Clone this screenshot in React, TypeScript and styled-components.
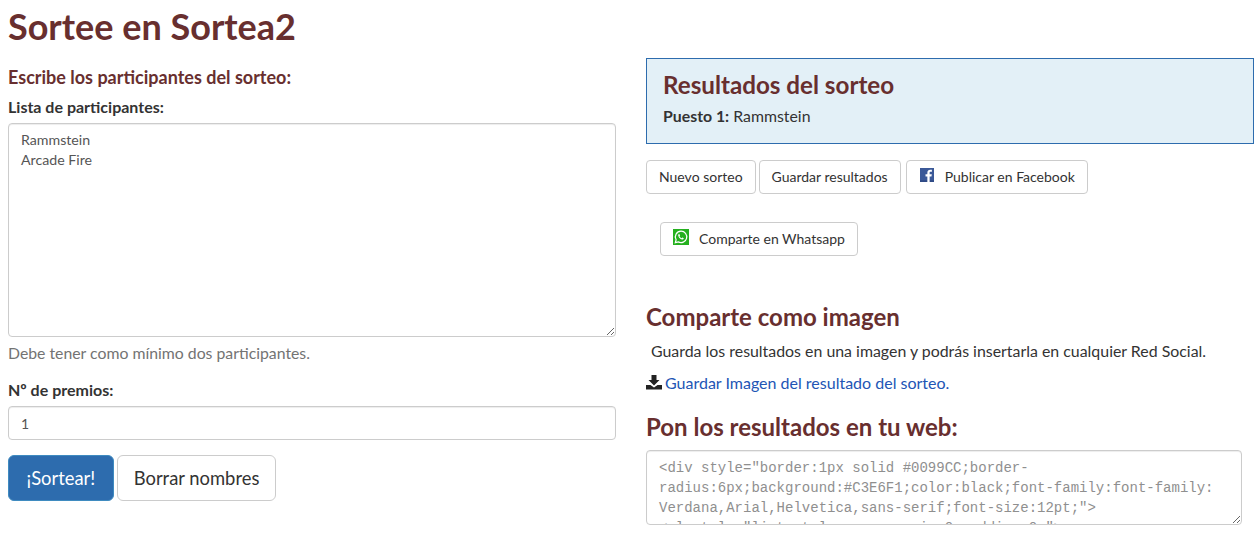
import React from "react";
import styled, { createGlobalStyle } from "styled-components";

const Global = createGlobalStyle`
  html, body { margin: 0; padding: 0; background: #fff; height: 535px; overflow: hidden; }
  body { font-family: Lato, "Liberation Sans", sans-serif; font-size: 14px; line-height: 20px; color: #333; }
  * { box-sizing: border-box; }
`;

const Page = styled.div`
  display: grid;
  grid-template-columns: 608px 608px;
  column-gap: 30px;
  padding: 0 0 0 8px;
  width: 1259px;
  height: 535px;
  overflow: hidden;
`;

const Column = styled.div`
  display: flex;
  flex-direction: column;
  min-width: 0;
`;

const Title = styled.h1`
  margin: 6px 0 0;
  font-size: 36px;
  line-height: 40px;
  font-weight: 700;
  color: #682f2f;
`;

const Subtitle = styled.h4`
  margin: 21px 0 0;
  font-size: 18px;
  line-height: 20px;
  font-weight: 700;
  color: #682f2f;
`;

const Label = styled.label<{ $top: number }>`
  display: block;
  margin: ${(p) => p.$top}px 0 6px;
  font-size: 16px;
  line-height: 20px;
  font-weight: 700;
  color: #333;
`;

const TextBox = styled.textarea<{ $h: number; $mono?: boolean; $w?: number }>`
  display: block;
  width: ${(p) => (p.$w ? `${p.$w}px` : "100%")};
  height: ${(p) => p.$h}px;
  padding: ${(p) => (p.$mono ? 7 : 6)}px 12px 6px;
  border: 1px solid #ccc;
  border-radius: 4px;
  box-shadow: inset 0 1px 1px rgba(0, 0, 0, 0.075);
  background: #fff;
  color: ${(p) => (p.$mono ? "#8f8f8f" : "#555")};
  font-family: ${(p) => (p.$mono ? '"Liberation Mono", monospace' : "Lato, sans-serif")};
  font-size: ${(p) => (p.$mono ? "14px" : "14.2px")};
  line-height: 20px;
  outline: none;
  overflow: hidden;
`;

const NumberBox = styled.input`
  display: block;
  width: 100%;
  height: 34px;
  padding: 6px 12px;
  border: 1px solid #ccc;
  border-radius: 4px;
  box-shadow: inset 0 1px 1px rgba(0, 0, 0, 0.075);
  color: #555;
  font-family: Lato, sans-serif;
  font-size: 14px;
  outline: none;
`;

const Help = styled.p`
  margin: 6px 0 0;
  font-size: 15.8px;
  line-height: 20px;
  color: #737373;
`;

const ActionRow = styled.div`
  display: flex;
  gap: 3px;
  margin-top: 15px;
`;

const BigButton = styled.button<{ $primary?: boolean }>`
  height: 46px;
  padding: 0 ${(p) => (p.$primary ? 17.5 : 16)}px;
  border: 1px solid ${(p) => (p.$primary ? "#3f8bc0" : "#ccc")};
  border-radius: 6px;
  background: ${(p) => (p.$primary ? "#2d6cae" : "#fff")};
  color: ${(p) => (p.$primary ? "#fff" : "#333")};
  font-family: Lato, sans-serif;
  font-size: 18.4px;
`;

const ResultPanel = styled.section`
  margin-top: 58px;
  height: 86px;
  padding: 10px 16px;
  border: 1px solid #2d6cae;
  background: #e3f0f7;
`;

const PanelTitle = styled.h3`
  margin: 3px 0 0;
  font-size: 24.2px;
  line-height: 26px;
  font-weight: 700;
  color: #682f2f;
`;

const PanelLine = styled.p`
  margin: 8px 0 0;
  font-size: 15.85px;
  line-height: 20px;
  color: #333;
  strong { font-weight: 700; }
`;

const ButtonRow = styled.div<{ $indent?: number; $top: number }>`
  display: flex;
  gap: 3px;
  margin: ${(p) => p.$top}px 0 0 ${(p) => p.$indent ?? 0}px;
`;

const SmallButton = styled.button<{ $shift?: number }>`
  display: inline-flex;
  align-items: center;
  height: 34px;
  padding: 0 12px 2px;
  margin-left: ${(p) => p.$shift ?? 0}px;
  border: 1px solid #ccc;
  border-radius: 4px;
  background: #fff;
  color: #333;
  font-family: Lato, sans-serif;
  font-size: 14px;
  white-space: nowrap;
`;

const BrandIcon = styled.svg<{ $size: number; $inset: number; $after: number }>`
  display: block;
  width: ${(p) => p.$size}px;
  height: ${(p) => p.$size}px;
  margin: 0 ${(p) => p.$after}px 0 ${(p) => p.$inset}px;
  position: relative;
  top: -1px;
  flex: none;
`;

const Section = styled.h3<{ $top: number }>`
  margin: ${(p) => p.$top}px 0 0;
  font-size: 24px;
  line-height: 26px;
  font-weight: 700;
  color: #682f2f;
`;

const Lead = styled.p`
  margin: 11px 0 0 5px;
  font-size: 15.9px;
  line-height: 20px;
  color: #333;
`;

const SaveLine = styled.div`
  display: flex;
  align-items: center;
  gap: 3px;
  margin-top: 12px;
  height: 20px;
`;

const SaveIcon = styled.svg`
  display: block;
  width: 16px;
  height: 16px;
  position: relative;
  top: -1px;
`;

const SaveLink = styled.a`
  color: #2255b5;
  font-size: 16px;
  text-decoration: none;
`;

const CodeWrap = styled.div`
  margin-top: 10px;
`;

const code = `<div style="border:1px solid #0099CC;border-radius:6px;background:#C3E6F1;color:black;font-family:font-family: Verdana,Arial,Helvetica,sans-serif;font-size:12pt;">
<ol style="list-style:none;margin:0;padding:0;">
<li>Rammstein</li></ol></div>`;

export default function App() {
  return (
    <>
      <Global />
      <Page>
        <Column>
          <Title>Sortee en Sortea2</Title>
          <Subtitle>Escribe los participantes del sorteo:</Subtitle>
          <Label $top={10}>Lista de participantes:</Label>
          <TextBox $h={214} defaultValue={"Rammstein\nArcade Fire"} />
          <Help>Debe tener como mínimo dos participantes.</Help>
          <Label $top={17}>Nº de premios:</Label>
          <NumberBox defaultValue="1" />
          <ActionRow>
            <BigButton $primary>¡Sortear!</BigButton>
            <BigButton>Borrar nombres</BigButton>
          </ActionRow>
        </Column>
        <Column>
          <ResultPanel>
            <PanelTitle>Resultados del sorteo</PanelTitle>
            <PanelLine>
              <strong>Puesto 1:</strong> Rammstein
            </PanelLine>
          </ResultPanel>
          <ButtonRow $top={16}>
            <SmallButton>Nuevo sorteo</SmallButton>
            <SmallButton>Guardar resultados</SmallButton>
            <SmallButton $shift={2}>
              <BrandIcon $size={14} $inset={1} $after={11} viewBox="0 0 16 16" aria-hidden="true">
                <rect width="16" height="16" fill="#3b5998" />
                <rect y="14" width="16" height="2" fill="#2f4a85" />
                <path d="M11 16V9.600h2.100l.4-2.500H11V5.600c0-.8.3-1.200 1.200-1.200h1.400V2.100c-.4 0-1.100-.1-1.900-.1-2 0-3.300 1.200-3.300 3.300v1.800H6.300v2.500h2.100V16z" fill="#fff" />
              </BrandIcon>
              Publicar en Facebook
            </SmallButton>
          </ButtonRow>
          <ButtonRow $indent={14} $top={28}>
            <SmallButton>
              <BrandIcon $size={16} $inset={0} $after={10} viewBox="0 0 16 16" aria-hidden="true">
                <rect width="16" height="16" fill="#25b01f" />
                <path d="M8 2.200a5.700 5.700 0 0 0-4.900 8.600l-.8 2.900 3-.8A5.700 5.700 0 1 0 8 2.200z" fill="none" stroke="#fff" strokeWidth="1.200" />
                <path d="M6 5c-.3 0-.7.400-.8 1-.1 1 .5 2.200 1.500 3.200s2.100 1.500 3.100 1.300c.6-.1 1-.6 1-1 0-.2-1.200-.9-1.400-.9-.2 0-.5.600-.7.700-.6 0-2-1.300-2.200-2 0-.2.500-.5.500-.8C7 5.900 6.400 5 6 5z" fill="#fff" />
              </BrandIcon>
              Comparte en Whatsapp
            </SmallButton>
          </ButtonRow>
          <Section $top={48}>Comparte como imagen</Section>
          <Lead>Guarda los resultados en una imagen y podrás insertarla en cualquier Red Social.</Lead>
          <SaveLine>
            <SaveIcon viewBox="0 0 16 16" aria-hidden="true">
              <path d="M5.500 1h5v5h3l-5.500 5.500L2.500 6h3z" fill="#222" />
              <path d="M0 11h4.500L8 13.500 11.500 11H16v4.500H0z" fill="#222" />
            </SaveIcon>
            <SaveLink>Guardar Imagen del resultado del sorteo.</SaveLink>
          </SaveLine>
          <Section $top={21}>Pon los resultados en tu web:</Section>
          <CodeWrap>
            <TextBox $h={75} $w={596} $mono defaultValue={code} />
          </CodeWrap>
        </Column>
      </Page>
    </>
  );
}
